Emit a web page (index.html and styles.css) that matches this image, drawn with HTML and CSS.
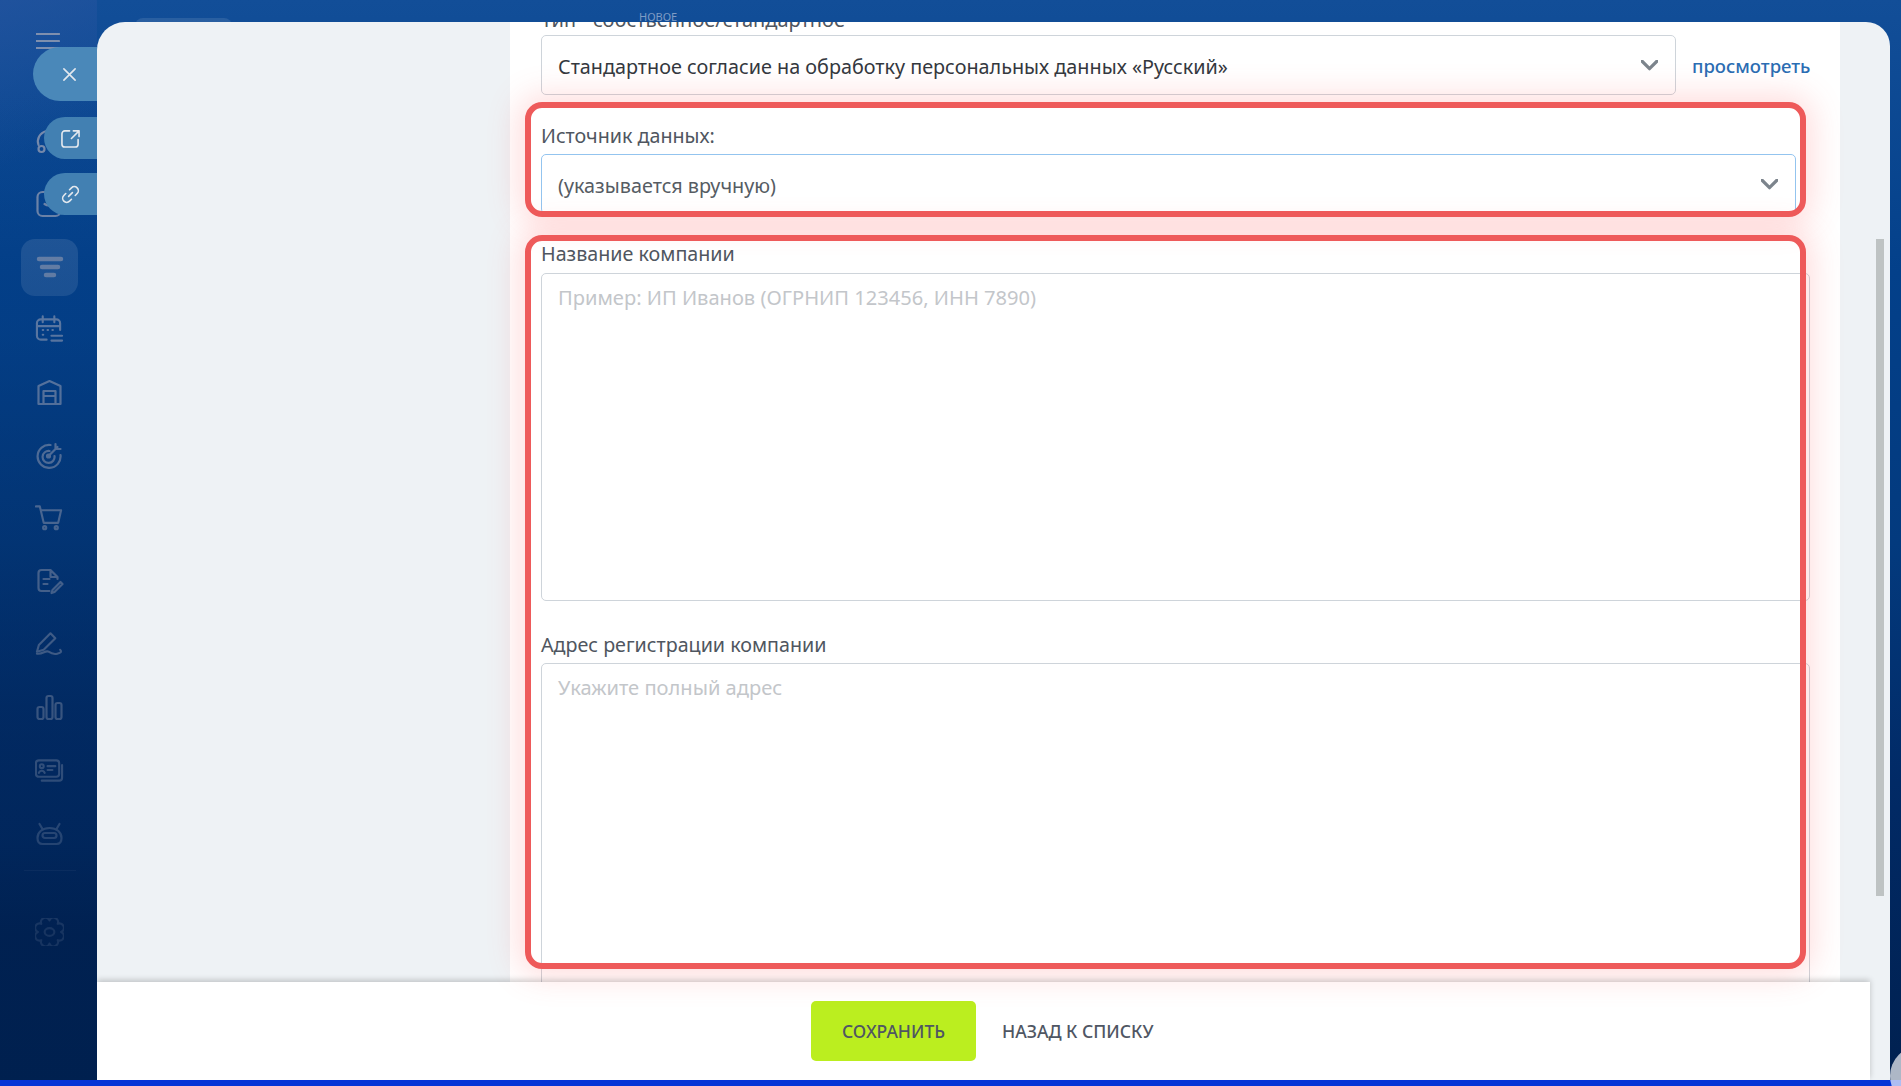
FILE: index.html
```html
<!DOCTYPE html>
<html lang="ru">
<head>
    <meta charset="UTF-8">
    <title>Согласие на обработку данных</title>
    <link rel="stylesheet" href="styles.css">
</head>
<body>
    <aside class="sidebar">
        <svg class="nav-burger" viewBox="0 0 24 16"><path d="M0 1h23M0 8h23M0 15h23"/></svg>
        <svg class="nav-icon" viewBox="0 0 28 28"><circle cx="6" cy="22" r="3"/><path d="M3 18c-2-6 1-12 8-14"/></svg>
        <svg class="nav-icon" viewBox="0 0 28 28"><rect x="2" y="2" width="23" height="24" rx="5"/><path d="M9 14c3 2 6 2 9-1"/></svg>
        <div class="nav-active">
            <svg class="funnel" viewBox="0 0 28 24"><path d="M3 3h22M6 11h16M10 19h8"/></svg>
        </div>
        <svg class="nav-icon" viewBox="0 0 30 28"><path d="M12 25H6a4 4 0 0 1-4-4V8a4 4 0 0 1 4-4h16a4 4 0 0 1 4 4v7M2 11h24M8 1v6M20 1v6"/><path d="M8 15h.5M13 15h.5M18 15h.5M8 20h.5M17 21h11M17 26h11"/></svg>
        <svg class="nav-icon" viewBox="0 0 28 28"><path d="M3 26V8l11-5 11 5v18z"/><path d="M8 26V13h12v13M8 18h12"/></svg>
        <svg class="nav-icon" viewBox="0 0 28 28"><path d="M25 14a11.500 11.500 0 1 1-10-10M19 15a6 6 0 1 1-5-5"/><circle cx="13" cy="15" r="1.500"/><path d="M13 15l9-9M20 3v5h5"/></svg>
        <svg class="nav-icon" viewBox="0 0 30 28"><path d="M1 2h4l4 17h15l3-13H6"/><circle cx="10" cy="24" r="1.600"/><circle cx="22" cy="24" r="1.600"/></svg>
        <svg class="nav-icon" viewBox="0 0 28 28"><path d="M14 24H6a3 3 0 0 1-3-3V6a3 3 0 0 1 3-3h9l7 7v2M15 3v7h7M8 12h6M8 17h4"/><path d="M17 23l8-8 2 2-8 8-3 1z"/></svg>
        <svg class="nav-icon" viewBox="0 0 30 28"><path d="M2 22l2-7L16 3l5 5L9 20z"/><path d="M2 24c6 1 9-4 12-2s5 3 9 2 5-2 3-4"/></svg>
        <svg class="nav-icon" viewBox="0 0 28 28"><rect x="2" y="14" width="6" height="12" rx="2"/><rect x="11" y="3" width="6" height="23" rx="2"/><rect x="20" y="10" width="6" height="16" rx="2"/></svg>
        <svg class="nav-icon" viewBox="0 0 30 28"><rect x="1" y="4" width="24" height="17" rx="3"/><circle cx="7" cy="10" r="2"/><path d="M4 17c1-3 5-3 6 0M13 10h8M13 14h5M28 9v13a3 3 0 0 1-3 3H7"/></svg>
        <svg class="nav-icon" viewBox="0 0 28 28"><path d="M2 19c0-6 5-10 12-10s12 4 12 10c0 4-2 6-5 6H7c-3 0-5-2-5-6z"/><rect x="7" y="14" width="14" height="5" rx="2.500"/><path d="M7 10L4 5M21 10l3-5"/></svg>
        <div class="nav-divider"></div>
        <svg class="nav-icon" viewBox="0 0 30 28"><path d="M15 2A4.500 4.500 0 0 1 23.500 5.500A4.500 4.500 0 0 1 27 14A4.500 4.500 0 0 1 23.500 22.500A4.500 4.500 0 0 1 15 26A4.500 4.500 0 0 1 6.500 22.500A4.500 4.500 0 0 1 3 14A4.500 4.500 0 0 1 6.500 5.500A4.500 4.500 0 0 1 15 2z"/><ellipse cx="15" cy="14" rx="5" ry="4"/></svg>
    </aside>

    <div class="top-tab"></div>
    <span class="top-new">НОВОЕ</span>

    <button class="pill pill-close">
        <svg viewBox="0 0 16 16"><path d="M2 2l12 12M14 2L2 14"/></svg>
    </button>
    <button class="pill pill-open">
        <svg viewBox="0 0 20 20"><path d="M9 2H4a3 3 0 0 0-3 3v11a3 3 0 0 0 3 3h11a3 3 0 0 0 3-3v-5M11 10l8-8M13 2h6v6"/></svg>
    </button>
    <button class="pill pill-link">
        <svg viewBox="0 0 20 20"><path d="M8 12l4-4M9 5l2-2a4 4 0 0 1 6 6l-2 2M11 15l-2 2a4 4 0 0 1-6-6l2-2"/></svg>
    </button>

    <div class="modal">
        <div class="modal-main">
            <div class="sheet">
                <form class="form">
                    <label class="field-label label-type">Тип - собственное/стандартное</label>
                    <div class="type-row">
                        <div class="select-wrap select-type">
                            <select class="control dark">
                                <option>Стандартное согласие на обработку персональных данных «Русский»</option>
                            </select>
                            <svg class="chevron" viewBox="0 0 16 10"><path d="M1 1l7 7 7-7"/></svg>
                        </div>
                        <a class="preview-link" href="#">просмотреть</a>
                    </div>

                    <label class="field-label label-source">Источник данных:</label>
                    <div class="select-wrap select-source">
                        <select class="control focused">
                            <option>(указывается вручную)</option>
                        </select>
                        <svg class="chevron" viewBox="0 0 16 10"><path d="M1 1l7 7 7-7"/></svg>
                    </div>

                    <label class="field-label label-company">Название компании</label>
                    <textarea class="text-area" placeholder="Пример: ИП Иванов (ОГРНИП 123456, ИНН 7890)"></textarea>

                    <label class="field-label label-address">Адрес регистрации компании</label>
                    <textarea class="text-area" placeholder="Укажите полный адрес"></textarea>

                    <div class="highlight highlight-source"></div>
                    <div class="highlight highlight-company"></div>
                </form>
            </div>
            <div class="scrollbar"><div class="scroll-thumb"></div></div>
        </div>
        <div class="footer">
            <button class="save-button">СОХРАНИТЬ</button>
            <a class="back-link" href="#">НАЗАД К СПИСКУ</a>
        </div>
    </div>

    <div class="bottom-strip"></div>
    <div class="corner-bubble"></div>
</body>
</html>
```

FILE: styles.css
```css
* {
    box-sizing: border-box;
}

html, body {
    height: 100%;
}

body {
    margin: 0;
    position: relative;
    overflow: hidden;
    font-family: "Noto Sans", Arial, sans-serif;
    background: linear-gradient(180deg, #124e98 0%, #03408a 25%, #033a7e 50%, #012a66 72%, #00204f 100%);
}

/* faded navigation behind the modal */
.sidebar {
    width: 97px;
    height: 100%;
    position: relative;
    display: flex;
    flex-direction: column;
    align-items: center;
    padding-top: 33px;
    padding-left: 2px;
    background: linear-gradient(160deg, rgba(40, 85, 160, 0.6), rgba(40, 85, 160, 0) 15%);
}

.sidebar::after {
    content: "";
    position: absolute;
    inset: 0;
    background: linear-gradient(180deg, rgba(4, 60, 130, 0) 8%, rgba(4, 60, 130, 0.3) 30%, rgba(1, 38, 90, 0.55) 65%, rgba(1, 38, 90, 0.7) 77%, rgba(0, 32, 79, 0.82) 86%);
    pointer-events: none;
}

.sidebar svg {
    fill: none;
    stroke: #7e8fae;
    stroke-width: 2.2;
    stroke-linecap: round;
    stroke-linejoin: round;
}

.nav-burger {
    width: 24px;
    height: 16px;
    margin-left: -4px;
    margin-bottom: 78px;
    flex: none;
}

.nav-icon {
    width: 29px;
    height: 28px;
    flex: none;
    margin-bottom: 35px;
}

.nav-active {
    width: 57px;
    height: 57px;
    flex: none;
    margin-top: -14px;
    margin-bottom: 19px;
    border-radius: 14px;
    background: rgba(255, 255, 255, 0.13);
    display: flex;
    align-items: center;
    justify-content: center;
}

.sidebar .funnel {
    width: 28px;
    height: 24px;
    stroke-width: 4.5;
}

.nav-divider {
    width: 52px;
    height: 1px;
    flex: none;
    margin-top: -12px;
    margin-bottom: 47px;
    background: rgba(255, 255, 255, 0.15);
}

.top-tab {
    position: absolute;
    left: 135px;
    top: 18px;
    width: 97px;
    height: 10px;
    border-radius: 8px 8px 0 0;
    background: rgba(255, 255, 255, 0.1);
}

.top-new {
    position: absolute;
    left: 639px;
    top: 12px;
    font-size: 11px;
    line-height: 10px;
    color: #7f9cc4;
}

/* round buttons on the modal's left edge */
.pill {
    position: absolute;
    right: calc(100% - 97px);
    border: none;
    padding: 0;
    display: flex;
    align-items: center;
    border-radius: 27px 0 0 27px;
    background: #4280b2;
}

.pill svg {
    fill: none;
    stroke: #e3e8ee;
    stroke-width: 1.7;
    stroke-linecap: round;
    stroke-linejoin: round;
}

.pill-close {
    top: 47px;
    width: 64px;
    height: 54px;
    padding-left: 29px;
    background: #4a88b9;
}

.pill-close svg {
    width: 15px;
    height: 15px;
}

.pill-open, .pill-link {
    width: 53px;
    height: 42px;
    padding-left: 17px;
    border-radius: 21px 0 0 21px;
}

.pill-open {
    top: 117px;
}

.pill-link {
    top: 173px;
}

.pill-open svg, .pill-link svg {
    width: 19px;
    height: 19px;
}

/* modal */
.modal {
    position: absolute;
    left: 97px;
    top: 22px;
    right: 11px;
    bottom: 6px;
    display: flex;
    flex-direction: column;
    border-radius: 28px 24px 0 0;
    background: #eef2f5;
    overflow: hidden;
}

.modal-main {
    flex: 1;
    min-height: 0;
    display: flex;
    position: relative;
    padding-left: 413px;
}

.sheet {
    width: 1330px;
    background: #ffffff;
}

.form {
    position: relative;
    margin-top: -22px;
    padding-left: 31px;
    display: flex;
    flex-direction: column;
    align-items: flex-start;
}

.field-label {
    display: block;
    font-size: 19.700px;
    line-height: 27px;
    color: #4f5660;
}

.label-type {
    margin-top: 6px;
    margin-bottom: 2px;
    font-size: 20px;
}

.type-row {
    display: flex;
    align-items: center;
    gap: 16px;
}

.preview-link {
    font-size: 18.500px;
    font-weight: 500;
    color: #2a6db3;
    text-decoration: none;
}

.select-wrap {
    position: relative;
}

.select-type {
    width: 1135px;
}

.select-source {
    width: 1255px;
}

.control {
    display: block;
    width: 100%;
    height: 60px;
    padding: 2px 40px 0 16px;
    appearance: none;
    background: #ffffff;
    border: 1px solid #ced4da;
    border-radius: 5px;
    font-family: inherit;
    font-size: 19.800px;
    color: #565c63;
}

.control.dark {
    color: #33383e;
}

.control.focused {
    border-color: #93c4ef;
}

.chevron {
    position: absolute;
    right: 18px;
    top: 25px;
    width: 17px;
    height: 11px;
    fill: none;
    stroke: #7c848c;
    stroke-width: 3;
    stroke-linecap: round;
    stroke-linejoin: round;
}

.label-source {
    margin-top: 27px;
    margin-bottom: 5px;
}

.label-company {
    margin-top: 26px;
    margin-bottom: 6px;
}

.label-address {
    margin-top: 30px;
    margin-bottom: 5px;
}

.text-area {
    display: block;
    width: 1269px;
    height: 328px;
    flex: none;
    padding: 9px 16px;
    resize: none;
    background: #ffffff;
    border: 1px solid #ced4da;
    border-radius: 5px;
    font-family: inherit;
    font-size: 20.100px;
    line-height: 30px;
    color: #4f5660;
}

.text-area::placeholder {
    color: #c3c6ca;
    opacity: 1;
}

/* red annotation frames drawn on the screenshot */
.highlight {
    position: absolute;
    left: 15px;
    width: 1281px;
    border: 6px solid #ee5a5a;
    border-radius: 17px;
    box-shadow: 0 0 32px 6px rgba(255, 90, 90, 0.22);
    z-index: 3;
}

.highlight-source {
    top: 102px;
    height: 115px;
}

.highlight-company {
    top: 235px;
    height: 734px;
}

.scrollbar {
    position: absolute;
    left: 1779px;
    top: 0;
    width: 8px;
    height: 100%;
}

.scroll-thumb {
    margin-top: 217px;
    height: 657px;
    background: #bec3c3;
}

.footer {
    position: relative;
    z-index: 2;
    flex: none;
    width: 1773px;
    height: 98px;
    padding-left: 714px;
    display: flex;
    align-items: center;
    gap: 26px;
    background: #ffffff;
    box-shadow: 0 -2px 6px rgba(0, 0, 0, 0.2);
}

.save-button {
    width: 165px;
    height: 60px;
    margin-top: -1px;
    border: none;
    border-radius: 5px;
    background: #bbee1f;
    font-family: inherit;
    font-size: 17.500px;
    font-weight: 500;
    color: #4f5663;
}

.back-link {
    font-size: 17.600px;
    font-weight: 500;
    color: #4f5663;
    text-decoration: none;
}

.bottom-strip {
    position: absolute;
    left: 0;
    right: 0;
    bottom: 0;
    height: 6px;
    background: #0634d6;
}

.corner-bubble {
    position: absolute;
    left: 1890px;
    top: 1046px;
    width: 60px;
    height: 60px;
    border-radius: 50%;
    background: rgba(255, 255, 255, 0.68);
}
```
